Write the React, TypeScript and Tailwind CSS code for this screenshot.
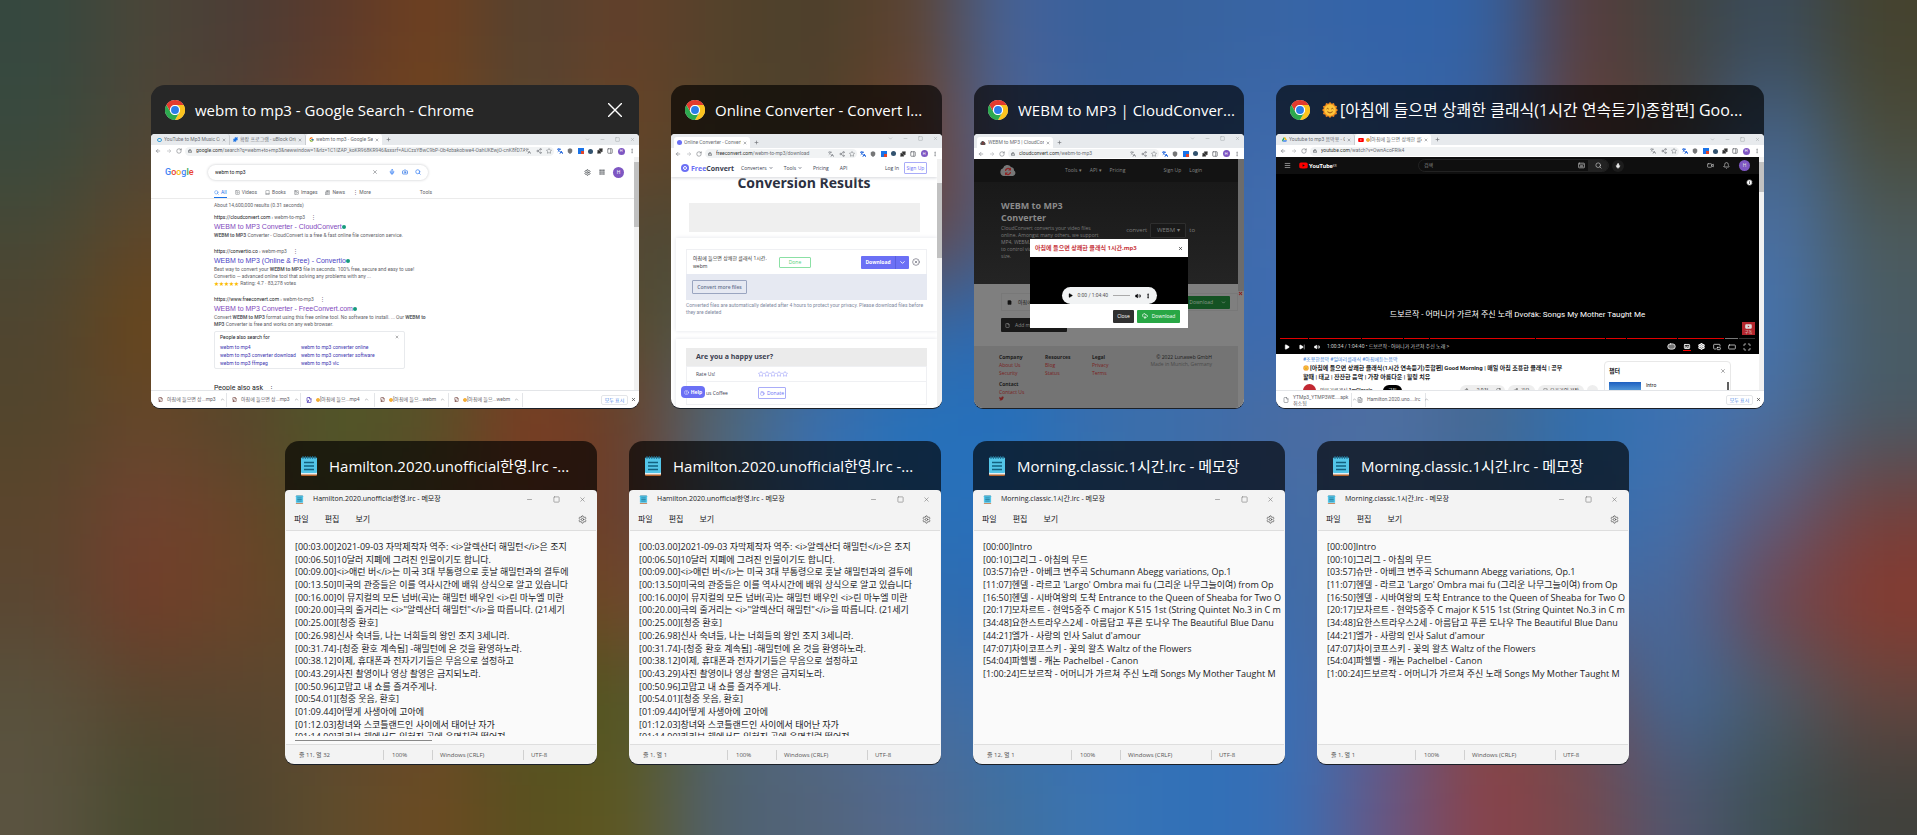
import type { ReactNode } from "react";
import {
  ArrowLeft,
  ArrowRight,
  Bell,
  Book,
  Captions,
  Camera,
  ChevronDown,
  ChevronUp,
  CircleHelp,
  CircleX,
  CloudDownload,
  Coffee,
  EllipsisVertical,
  File,
  FileMusic,
  FileText,
  Flag,
  Image,
  Info,
  Keyboard,
  Languages,
  Lock,
  Maximize,
  Menu,
  Mic,
  Minus,
  Newspaper,
  PanelRight,
  PictureInPicture2,
  Play,
  Plus,
  Puzzle,
  RectangleHorizontal,
  RotateCw,
  Search,
  Settings,
  Share2,
  Shield,
  SkipForward,
  SquarePlay,
  Square,
  Star,
  ThumbsDown,
  ThumbsUp,
  ToggleRight,
  Volume2,
  VideoIcon,
  X,
} from "lucide-react";
import { FcGoogle } from "react-icons/fc";
import { FaTwitter, FaYoutube } from "react-icons/fa";
import { BsGrid3X3GapFill } from "react-icons/bs";

/* ---------- wallpaper ---------- */

const WALLPAPER = [
  "36483f 4b4638 4b3d36 5c3a2b 70401f 544230 64402a 54422b 4c402c 5e422e 466399 37609c 38639f 3865a6 3263a9 3362a4 5a3c3a 404440 3a4c5e 45432f",
  "3a4a3e 4f4636 554032 6a3f28 70461c 584632 6a4424 54452c 50412b 744028 4d6496 3b63a0 3a66a8 3f6aab 3a66a8 3a62a0 6a4038 4d4240 446a98 4a4c3c",
  "474835 60472a 5c4429 5c4a2c 604c28 564a30 4f4838 504830 55442c 6c4238 4d5c80 3868a8 3c68a8 446eb0 4470b0 446ca4 5f5458 4a5c78 4a73ab 4b5a5c",
  "504530 6b4518 5f4828 54502a 5a4c28 6c4228 554b2c 50564c 446488 3a68a4 2a6ab4 386cb0 3c6cb0 3a6bb0 4870a8 446ca0 3c6ca4 4472b0 4574b0 4a5c64",
  "52452c 65472a 54462d 505828 575228 7c3c22 6c3f28 4f6a80 3a70b0 2571bb 2470bb 3a6fab 3f6da8 4c6ba0 506ea0 46678d 2f70b0 3c72b3 4c6f9f 475a66",
  "5c452c 714230 6a4428 505028 604828 743c24 683e2c 4f6070 3a6eac 2870b8 2a70bb 366eb0 3d6ca8 446ca6 4870a4 3c6ca0 346cac 4470ac 5c5c7c 74403c",
  "5a4632 743c28 6b4528 5c4828 644828 5c4c28 784424 54585c 40689c 306cb0 2b6bb3 386cb0 3c6eb0 3f6ca8 506494 5c5c80 48689c 49689c 74444c 883a2e",
  "59513c 58462f 5a4630 5c4830 68482a 505422 52561f 50646c 50688c 446ca0 3a70b0 386fb2 3070b8 3c70b4 5c5c8c 8a443c 6c4c54 3f6a9c 4a5c6c 644640",
  "5a5340 484a2f 4f4530 5f4c2c 6c4a22 595020 5e5820 4f6170 52647a 52698f 3f709f 3974b5 3070b8 3a6eb4 6a5580 8a4248 75494e 4f5670 3d4f52 40413c",
].map((row) => row.split(" "));

function Wallpaper() {
  return (
    <svg
      className="absolute inset-0 h-full w-full"
      viewBox="0 0 20 9"
      preserveAspectRatio="none"
      aria-hidden="true"
    >
      <defs>
        <filter id="soften" x="-10%" y="-20%" width="120%" height="140%" colorInterpolationFilters="sRGB">
          <feGaussianBlur stdDeviation="0.42 0.5" />
        </filter>
      </defs>
      <g filter="url(#soften)" shapeRendering="crispEdges">
        {WALLPAPER.map((row, y) =>
          row.map((color, x) => (
            <rect
              key={`${x}-${y}`}
              x={x === 0 ? -2 : x}
              y={y === 0 ? -2 : y}
              width={x === 0 || x === 19 ? 3 : 1}
              height={y === 0 || y === 8 ? 3 : 1}
              fill={`#${color}`}
            />
          ))
        )}
      </g>
    </svg>
  );
}

/* ---------- logos ---------- */

function ChromeLogo() {
  return (
    <svg className="size-5 shrink-0" viewBox="0 0 48 48" aria-hidden="true">
      <circle cx="24" cy="24" r="24" fill="#fff" />
      <path d="M24 12h20.8A24 24 0 0 0 3.2 12l10.4 18A12 12 0 0 1 24 12z" fill="#e33b2e" />
      <path d="M34.4 30 24 48A24 24 0 0 0 44.8 12H24a12 12 0 0 1 10.4 18z" fill="#fcc31e" />
      <path d="M13.6 30 3.2 12A24 24 0 0 0 24 48l10.4-18a12 12 0 0 1-20.8 0z" fill="#2da94f" />
      <circle cx="24" cy="24" r="12" fill="#fff" />
      <circle cx="24" cy="24" r="9.5" fill="#2b7de9" />
    </svg>
  );
}

function NotepadLogo({ className }: { className: string }) {
  return (
    <svg className={className} viewBox="0 0 20 20" aria-hidden="true">
      <rect x="2" y="17" width="16" height="3" rx="1" fill="#b5622b" />
      <rect x="2" y="15" width="16" height="3.5" fill="#e9eef0" />
      <rect x="2" y="1.5" width="16" height="15.5" rx="1" fill="#53c5e8" />
      <path d="M4 0v3M6.4 0v3M8.8 0v3M11.2 0v3M13.6 0v3M16 0v3" stroke="#1c6f92" strokeWidth="1" />
      <path d="M5 6.5h10M5 10h10M5 13.5h10" stroke="#12607f" strokeWidth="1.3" />
    </svg>
  );
}

function SunFace({ className }: { className: string }) {
  return (
    <svg className={className} viewBox="0 0 24 24" aria-hidden="true">
      <path
        d="M12 0l2.6 2.8L18 1.6l1 3.6 3.6 1L21.4 9.6 24 12l-2.6 2.6 1.2 3.4-3.6 1-1 3.6-3.4-1.2L12 24l-2.6-2.6L6 22.6l-1-3.6-3.600-1 1.200-3.400L0 12l2.600-2.400L1.400 6.200l3.600-1 1-3.600 3.400 1.200z"
        fill="#f08a1d"
      />
      <circle cx="12" cy="12" r="8.5" fill="#fdc53a" />
      <path d="M7 10.5q1.5-2 3 0M14 10.5q1.5-2 3 0M8 14.5q4 4 8 0" fill="none" stroke="#8a4a12" strokeWidth="1.4" />
    </svg>
  );
}

/* ---------- task card ---------- */

type CardProps = {
  title: string;
  icon: ReactNode;
  emoji?: boolean;
  active?: boolean;
  className: string;
  children: ReactNode;
};

function TaskCard({ title, icon, emoji, active, className, children }: CardProps) {
  return (
    <article
      className={`flex shrink-0 flex-col overflow-hidden rounded-t-[14px] rounded-b-[9px] shadow-[0_1px_0_#1b2028] ${className} ${
        active ? "bg-[#272727]" : "bg-black/65"
      }`}
    >
      <header className="flex h-[49px] shrink-0 items-center gap-[10px] pr-[8px] pl-[14px] text-white">
        {icon}
        {emoji && <SunFace className="mr-[-8px] ml-[2px] size-4 shrink-0" />}
        <h2 className={`min-w-0 flex-1 leading-6 whitespace-nowrap ${emoji ? "text-base" : "text-[15px]"}`}>{title}</h2>
        {active && (
          <button type="button" aria-label="Close" className="mr-[5px] flex size-[22px] items-center justify-center">
            <svg className="size-[14px]" viewBox="0 0 14 14" stroke="#fff" strokeWidth="1.4" aria-hidden="true">
              <path d="M0 0l14 14M14 0L0 14" />
            </svg>
          </button>
        )}
      </header>
      <div className="flex h-[274px] flex-col overflow-hidden rounded-t-[4px] bg-white text-[#202124]">{children}</div>
    </article>
  );
}

/* ---------- browser chrome ---------- */

type Tab = { title: string; icon: ReactNode; active?: boolean };

function BrowserChrome({
  tabs,
  url,
  path,
  compact,
}: {
  tabs: Tab[];
  url: string;
  path: string;
  compact?: boolean;
}) {
  return (
    <div className="shrink-0 font-[Roboto,'Noto_Sans_CJK_KR',sans-serif] text-[5px] text-[#6b6f74]">
      <div className={`flex items-end bg-[#e7eaed] pl-[3px] ${compact ? "h-[14px]" : "h-[11px]"}`}>
        {tabs.map((tab, i) => (
          <div
            key={i}
            className={`flex h-[11px] w-[76px] items-center gap-[2px] rounded-t-[3px] px-[3px] ${
              tab.active ? "bg-white" : "border-r border-[#c9ccd0]"
            }`}
          >
            {tab.icon}
            <span className="min-w-0 flex-1 overflow-hidden whitespace-nowrap">{tab.title}</span>
            <X className="size-1 shrink-0" strokeWidth={3} />
          </div>
        ))}
        <Plus className="mb-[3px] ml-1 size-[5px]" strokeWidth={3} />
        <div className={`mr-[4px] ml-auto flex w-[50px] items-center justify-between self-start text-[#9a9da1] ${compact ? "pt-[2px]" : "pt-[3px]"}`}>
          <ChevronDown className="size-[5px]" />
          <Minus className="size-[5px]" />
          <Square className="size-[5px]" />
          <X className="size-[5px]" />
        </div>
      </div>
      <div className={`flex items-center bg-white pr-1 pl-1 ${compact ? "h-[11px]" : "h-[12px]"}`}>
        <div className="flex w-[27px] shrink-0 justify-between text-[#5f6368]">
          <ArrowLeft className="size-[6px]" />
          <ArrowRight className="size-[6px] opacity-60" />
          <RotateCw className="size-[6px]" />
        </div>
        <div className="mx-[3px] flex h-[9px] min-w-0 flex-1 items-center rounded-full bg-[#f1f3f4] pr-[2px] pl-[3px]">
          <Lock className="mr-[4px] size-[4px] shrink-0" strokeWidth={4} />
          <span className="min-w-0 flex-1 overflow-hidden whitespace-nowrap">
            <span className="text-[#333]">{url}</span>
            {path}
          </span>
          <div className="flex w-[27px] shrink-0 justify-between">
            <Languages className="size-[6px]" />
            <Share2 className="size-[6px]" />
            <Star className="size-[6px]" />
          </div>
        </div>
        <div className="flex w-[78px] shrink-0 items-center justify-between">
          <Languages className="size-[6px] text-[#2f6fde]" strokeWidth={4} />
          <Shield className="size-[6px]" fill="#777" />
          <span className="flex size-[6px] items-end justify-end bg-[#1a73e8]">
            <span className="size-[3px] bg-[#e0452c]" />
          </span>
          <span className="size-[5px] rounded-full bg-[#33536f]" />
          <Puzzle className="size-[6px] text-[#333]" fill="#333" />
          <PanelRight className="size-[6px]" strokeWidth={3} />
          <span className="flex size-[7px] items-center justify-center rounded-full bg-[#7e57c2] text-[4px] text-white">H</span>
          <EllipsisVertical className="size-[6px]" />
        </div>
      </div>
    </div>
  );
}

function Scrollbar({ children }: { children: ReactNode }) {
  return <div className="flex w-[5px] shrink-0 flex-col items-stretch bg-[#f1f1f1]">{children}</div>;
}

function DownloadBar({ items }: { items: ReactNode[] }) {
  return (
    <div className="flex h-[18px] shrink-0 items-center border-t border-[#e3e5e8] bg-white pl-[2px] font-[Roboto,'Noto_Sans_CJK_KR',sans-serif] text-[5px] whitespace-nowrap text-[#5f6368]">
      {items.map((item, i) => (
        <div key={i} className="flex h-[14px] w-[74px] items-center gap-[4px] border-r border-[#e3e5e8] pr-[5px] pl-[5px]">
          {item}
          <ChevronUp className="ml-auto size-[5px] shrink-0" />
        </div>
      ))}
      <button type="button" className="mr-[3px] ml-auto h-[10px] w-[27px] rounded-[2px] border border-[#e3e5e8] leading-[8px] text-[#4a87e8]">
        모두 표시
      </button>
      <X className="mr-[3px] size-[5px] text-[#333]" strokeWidth={3} />
    </div>
  );
}

/* ---------- Google results ---------- */

const AUDIO_ICON = <FileMusic className="size-[5px] shrink-0 text-[#7a4b45]" strokeWidth={3} />;
const SUN_TINY = <SunFace className="mr-[-4px] size-[4px] shrink-0" />;

const googleDownloads = [
  <>{AUDIO_ICON}<span>아침에 들으면 상...mp3</span></>,
  <>{AUDIO_ICON}<span>아침에 들으면 상...mp3</span></>,
  <><FileMusic className="size-[6px] shrink-0 text-[#5340b8]" strokeWidth={3} />{SUN_TINY}<span>[아침에 들으...mp4</span></>,
  <>{AUDIO_ICON}{SUN_TINY}<span>[아침에 들으...webm</span></>,
  <>{AUDIO_ICON}{SUN_TINY}<span>[아침에 들으...webm</span></>,
];

const related = [
  ["webm to mp4", "webm to mp3 converter online"],
  ["webm to mp3 converter download", "webm to mp3 converter software"],
  ["webm to mp3 ffmpeg", "webm to mp3 vlc"],
];

function Result({ site, path, title, visited, children }: { site: string; path: string; title: string; visited?: boolean; children: ReactNode }) {
  return (
    <div>
      <p>
        <span className="text-[#202124]">{site}</span> › {path}
        <span className="ml-[6px]">⋮</span>
      </p>
      <h3 className="flex items-center font-['Liberation_Sans',sans-serif] text-[7px] leading-[11px] whitespace-nowrap">
        <a href="#result" className={visited ? "text-[#8148bd]" : "text-[#4a3fc4]"}>
          {title}
        </a>
        <span className="size-[4px] rounded-full bg-[#159a7c]" />
      </h3>
      {children}
    </div>
  );
}

function GoogleWindow() {
  return (
    <>
      <BrowserChrome
        tabs={[
          { title: "YouTube to Mp3 Music Conver", icon: <span className="h-1 w-[5px] shrink-0 rounded-full border border-[#3aa0d8]" /> },
          { title: "확장 프로그램 - uBlock Origin", icon: <Puzzle className="size-[5px] shrink-0 text-[#1a73e8]" fill="#1a73e8" /> },
          { title: "webm to mp3 - Google Search", icon: <FcGoogle className="size-[5px] shrink-0" />, active: true },
        ]}
        url="google.com"
        path="/search?q=webm+to+mp3&newwindow=1&rlz=1C1IZAP_koKR968KR946&sxsrf=ALiCzsYBwC9bP-Ob4zbakobwe4-OahUKEwjO-cnK8fD7AhWDM5QKHfjw..."
      />
      <div className="flex min-h-0 flex-1 font-[Roboto,'Noto_Sans_CJK_KR',sans-serif]">
        <div className="min-w-0 flex-1 overflow-hidden text-[5px] leading-[7px] text-[#5f6368]">
          <div className="flex h-[30px] items-center pr-[10px] pl-[14px]">
            <div className="w-[43px] text-[9px] leading-[12px] font-medium">
              <span className="text-[#4285f4]">G</span>
              <span className="text-[#ea4335]">o</span>
              <span className="text-[#fbbc05]">o</span>
              <span className="text-[#4285f4]">g</span>
              <span className="text-[#34a853]">l</span>
              <span className="text-[#ea4335]">e</span>
            </div>
            <div className="flex h-[15px] w-[220px] items-center gap-[7px] rounded-full px-[7px] shadow-[0_0_3px_#c4c6c9]">
              <input aria-label="Search" defaultValue="webm to mp3" className="min-w-0 flex-1 text-[5px] text-[#202124] outline-none" />
              <X className="mr-1 size-[6px]" />
              <Mic className="size-[6px] text-[#4285f4]" strokeWidth={3} />
              <Camera className="size-[6px] text-[#3b7de8]" strokeWidth={3} />
              <Search className="size-[6px] text-[#4285f4]" strokeWidth={3} />
            </div>
            <div className="ml-auto flex items-center gap-[8px]">
              <Settings className="size-[7px]" strokeWidth={3} />
              <BsGrid3X3GapFill className="size-[6px]" />
              <span className="flex size-[11px] items-center justify-center rounded-full bg-[#7e57c2] text-white">H</span>
            </div>
          </div>
          <nav className="flex h-[12px] items-stretch gap-[8px] border-b border-[#ebebeb] pl-[63px]">
            <a href="#all" className="flex items-center gap-[2px] border-b border-[#1a73e8] text-[#1a73e8]"><Search className="size-[5px]" />All</a>
            <a href="#videos" className="flex items-center gap-[2px]"><SquarePlay className="size-[5px]" />Videos</a>
            <a href="#books" className="flex items-center gap-[2px]"><Book className="size-[5px]" />Books</a>
            <a href="#images" className="flex items-center gap-[2px]"><Image className="size-[5px]" />Images</a>
            <a href="#news" className="flex items-center gap-[2px]"><Newspaper className="size-[5px]" />News</a>
            <a href="#more" className="flex items-center gap-[2px]">⋮ More</a>
            <a href="#tools" className="ml-[41px] flex items-center">Tools</a>
          </nav>
          <div className="flex w-[254px] flex-col gap-[9px] pt-[3px] pl-[63px]">
            <div>
              <p className="mb-[5px]">About 14,600,000 results (0.31 seconds)</p>
              <Result site="https://cloudconvert.com" path="webm-to-mp3" title="WEBM to MP3 Converter - CloudConvert" visited>
                <p className="whitespace-nowrap"><b>WEBM to MP3</b> Converter - CloudConvert is a free &amp; fast online file conversion service.</p>
              </Result>
            </div>
            <Result site="https://convertio.co" path="webm-mp3" title="WEBM to MP3 (Online & Free) - Convertio">
              <p className="whitespace-nowrap">Best way to convert your <b>WEBM to MP3</b> file in seconds. 100% free, secure and easy to use!</p>
              <p>Convertio — advanced online tool that solving any problems with any ...</p>
              <p><span className="text-[#fbbc04]">★★★★★</span> Rating: 4.7 · 83,278 votes</p>
            </Result>
            <div>
              <Result site="https://www.freeconvert.com" path="webm-to-mp3" title="WEBM to MP3 Converter - FreeConvert.com" visited>
                <p className="whitespace-nowrap">Convert <b>WEBM to MP3</b> format using this free online tool. No software to install. ... Our <b>WEBM to</b></p>
                <p><b>MP3</b> Converter is free and works on any web browser.</p>
              </Result>
              <div className="mt-[3px] flex h-[38px] flex-col justify-center rounded-[2px] border border-[#e8eaed] px-[5px]">
                <div className="flex items-center justify-between text-[#202124]">People also search for<X className="size-1" /></div>
                <div className="mt-[2px] grid grid-cols-[auto_1fr] gap-x-[5px] leading-[8px] whitespace-nowrap text-[#4036b0]">
                  {related.flat().map((text) => (
                    <a key={text} href="#related">{text}</a>
                  ))}
                </div>
              </div>
              <p className="mt-[14px] text-[7px] leading-[10px] text-[#202124]">People also ask<span className="ml-[6px] text-[5px]">⋮</span></p>
            </div>
          </div>
        </div>
        <Scrollbar>
          <div className="mt-[5px] h-[65px] bg-[#c1c1c1]" />
        </Scrollbar>
      </div>
      <DownloadBar items={googleDownloads} />
    </>
  );
}

/* ---------- FreeConvert ---------- */

function FreeConvertWindow() {
  return (
    <>
      <BrowserChrome
        compact
        tabs={[{ title: "Online Converter - Convert Ima", icon: <span className="size-[5px] shrink-0 rounded-full bg-[#6b70f5]" />, active: true }]}
        url="freeconvert.com"
        path="/webm-to-mp3/download"
      />
      <div className="flex min-h-0 flex-1 text-[#3a4050]">
        <div className="relative min-w-0 flex-1 overflow-hidden text-[5px] leading-[7px]">
          <nav className="relative flex h-[18px] items-center pr-[10px] pl-[10px] shadow-[0_1px_3px_#d5d7dc]">
            <span className="mr-[2px] flex size-[8px] items-center justify-center rounded-full bg-[#6b70f5]">
              <span className="size-1 rounded-full border border-white" />
            </span>
            <b className="text-[7px]"><span className="text-[#6b70f5]">Free</span>Convert</b>
            <div className="ml-[7px] flex items-center gap-[11px]">
              <a href="#converters" className="flex items-center gap-[2px]">Converters<ChevronDown className="size-1" strokeWidth={4} /></a>
              <a href="#tools" className="flex items-center gap-[2px]">Tools<ChevronDown className="size-1" strokeWidth={4} /></a>
              <a href="#pricing">Pricing</a>
              <a href="#api">API</a>
            </div>
            <a href="#login" className="ml-auto">Log In</a>
            <button type="button" className="ml-[5px] h-[12px] w-[23px] rounded-[1px] border border-[#a9acf8] leading-[7px] text-[#6b70f5]">Sign Up</button>
          </nav>
          <h3 className="mt-[-2px] text-center text-sm leading-[16px] font-bold text-[#2b3040]">Conversion Results</h3>
          <div className="mx-auto mt-[12px] h-[29px] w-[231px] bg-[#efefef]" />
          <section className="mt-[6px] ml-[5px] h-[93px] px-[10px] pt-[11px] shadow-[0_0_4px_#e2e3e8]">
            <div className="flex h-[25px] items-center border border-b-0 border-[#eff0f3] pl-[6px]">
              <p className="w-[86px] leading-[8px] text-[#333]">아침에 들으면 상쾌한 클래식 1시간.<br />webm</p>
              <span className="h-[11px] w-[32px] rounded-[1px] border border-[#8be0a5] text-center leading-[9px] text-[#4fd07a]">Done</span>
              <button type="button" className="ml-auto flex h-[13px] w-[48px] items-center rounded-[1px] bg-[#6b70f5] font-bold text-white">
                <span className="w-[34px] text-center">Download</span>
                <span className="flex h-full flex-1 items-center justify-center border-l border-[#5a5fe0]"><ChevronDown className="size-[7px]" strokeWidth={3} /></span>
              </button>
              <CircleX className="mr-[6px] ml-[3px] size-[8px] text-[#667]" />
            </div>
            <div className="flex h-[26px] items-center bg-[#e6e9f2] pl-[6px]">
              <button type="button" className="h-[14px] w-[55px] rounded-[1px] border border-[#9aa5c0] leading-[7px] font-semibold text-[#66728f]">Convert more files</button>
            </div>
            <p className="mt-[2px] font-[Roboto,sans-serif] text-[#8089a0]">Converted files are automatically deleted after 4 hours to protect your privacy. Please download files before they are deleted</p>
          </section>
          <section className="mt-[8px] ml-[5px] h-[80px] px-[10px] pt-[9px] shadow-[0_0_4px_#e2e3e8]">
            <h4 className="h-[18px] bg-[#ebebeb] pl-[10px] text-[7px] leading-[18px] font-bold">Are you a happy user?</h4>
            <div className="flex h-[16px] items-center border border-[#eff0f3] pl-[9px]">
              <span className="w-[62px]">Rate Us!</span>
              {[0, 1, 2, 3, 4].map((n) => (
                <Star key={n} className="size-[6px] text-[#8c90f7]" />
              ))}
            </div>
            <div className="flex h-[23px] items-center border border-t-0 border-[#eff0f3] pl-[9px]">
              <span className="w-[62px] pl-[10px]">us Coffee</span>
              <button type="button" className="flex h-[12px] w-[28px] items-center justify-center gap-[2px] rounded-[1px] border border-[#a9acf8] text-[#6b70f5]"><Coffee className="size-[5px]" />Donate</button>
            </div>
          </section>
          <button type="button" className="absolute bottom-[10px] left-[10px] flex h-[12px] w-[24px] items-center justify-center gap-[2px] rounded-[4px] bg-[#6b70f5] font-bold text-white">
            <CircleHelp className="size-[5px]" />Help
          </button>
        </div>
        <Scrollbar>
          <div className="mt-[24px] h-[75px] bg-[#c1c1c1]" />
        </Scrollbar>
      </div>
    </>
  );
}

/* ---------- CloudConvert ---------- */

function CloudIcon({ className, cloud, arrows }: { className: string; cloud: string; arrows: string }) {
  return (
    <svg className={className} viewBox="0 0 32 22" aria-hidden="true">
      <path d="M8 22a8 8 0 0 1-2-15.5A9 9 0 0 1 22 4a7 7 0 0 1 6 7 6 6 0 0 1-2 11z" fill={cloud} />
      <path d="M11 12a5 5 0 0 1 9-3M21 14a5 5 0 0 1-9 3" fill="none" stroke={arrows} strokeWidth="2.5" />
      <path d="M22 5v6h-6zM10 21v-6h6z" fill={arrows} />
    </svg>
  );
}

function CloudConvertWindow() {
  return (
    <>
      <BrowserChrome
        compact
        tabs={[{ title: "WEBM to MP3 | CloudConvert", icon: <CloudIcon className="h-[4px] w-[6px] shrink-0" cloud="#555" arrows="#a22" />, active: true }]}
        url="cloudconvert.com"
        path="/webm-to-mp3"
      />
      <div className="relative flex min-h-0 flex-1 bg-[#7f7f7f] text-[5px] leading-[7px] font-['Open_Sans','Noto_Sans_CJK_KR',sans-serif]">
        <div className="flex min-w-0 flex-1 flex-col">
          <nav className="flex h-[23px] shrink-0 items-center bg-[#131313] pl-[26px] text-[#858585]">
            <CloudIcon className="h-[11px] w-[16px]" cloud="#777" arrows="#8f2424" />
            <div className="ml-[49px] flex gap-[8px]">
              <a href="#tools">Tools ▾</a>
              <a href="#api">API ▾</a>
              <a href="#pricing">Pricing</a>
            </div>
            <div className="mr-[36px] ml-auto flex gap-[8px]">
              <a href="#signup">Sign Up</a>
              <a href="#login">Login</a>
            </div>
          </nav>
          <section className="flex h-[102px] shrink-0 justify-between bg-linear-to-b from-[#191919] to-[#242424] pr-[43px] pl-[27px] text-[#7c7c7c]">
            <div className="w-[94px] pt-[18px]">
              <h3 className="text-[9px] leading-[12px] font-bold text-[#8a8a8a]">WEBM to MP3<br />Converter</h3>
              <p className="mt-px whitespace-pre">{"CloudConvert converts your video files\nonline. Amongst many others, we support\nMP4, WEBM,\nto control vid\nsize."}</p>
            </div>
            <div className="box-content flex h-[15px] items-center gap-[3px] pt-[41px] text-[6px]">
              <label htmlFor="from">convert</label>
              <select id="from" defaultValue="WEBM" className="h-[15px] w-[36px] appearance-none rounded-[1px] border border-[#2e2e2e] bg-[#191919] text-center text-[6px]">
                <option value="WEBM">WEBM ▾</option>
              </select>
              <span>to</span>
            </div>
          </section>
          <section className="flex h-[62px] shrink-0 flex-col gap-[7px] pt-[9px] pl-[27px] text-[#1c1c1c]">
            <div className="flex h-[18px] items-center border border-[#787878] pr-[7px] pl-[5px]">
              <FileText className="mr-[6px] size-[5px]" fill="#111" />
              아침에
              <button type="button" className="ml-auto flex h-[13px] w-[46px] items-center justify-end gap-[8px] rounded-[1px] bg-[#145223] pr-[4px] text-[#8a9a8d]">
                Download<ChevronDown className="size-[5px]" strokeWidth={3} />
              </button>
            </div>
            <button type="button" className="flex h-[14px] w-[66px] items-center gap-[5px] rounded-[1px] bg-[#191919] pl-[4px] text-[#8a8a8a]">
              <File className="size-[5px]" strokeWidth={3} />Add m
            </button>
          </section>
          <footer className="flex flex-1 bg-[#747474] pt-[7px] pl-[25px] text-[#7a2222]">
            <div className="w-[46px] leading-[8px]">
              <b className="block text-[#1c1c1c]">Company</b>
              <a href="#about" className="block">About Us</a>
              <a href="#security" className="block">Security</a>
              <b className="mt-[3px] block text-[#1c1c1c]">Contact</b>
              <a href="#contact" className="block">Contact Us</a>
              <FaTwitter className="size-[5px]" />
            </div>
            <div className="w-[47px] leading-[8px]">
              <b className="block text-[#1c1c1c]">Resources</b>
              <a href="#blog" className="block">Blog</a>
              <a href="#status" className="block">Status</a>
            </div>
            <div className="leading-[8px]">
              <b className="block text-[#1c1c1c]">Legal</b>
              <a href="#privacy" className="block">Privacy</a>
              <a href="#terms" className="block">Terms</a>
            </div>
            <p className="mr-[26px] ml-auto pt-px text-right text-[#4a4a4a]"><span className="text-[#1c1c1c]">© 2022 Lunaweb GmbH</span><br />Made in Munich, Germany</p>
          </footer>
        </div>
        <div className="flex w-[6px] shrink-0 flex-col">
          <div className="h-[132px] bg-[#6c6c6c]" />
          <X className="size-[5px] text-[#8a1f1f]" strokeWidth={5} />
        </div>
        <div role="dialog" aria-label="Preview" className="absolute top-[80px] left-[56px] flex h-[89px] w-[158px] flex-col bg-white">
          <div className="flex h-[18px] items-center justify-between px-[5px]">
            <b className="text-[6px] whitespace-nowrap text-[#c8373d]">아침에 들으면 상쾌한 클래식 1시간.mp3</b>
            <X className="size-[5px]" strokeWidth={3} />
          </div>
          <div className="flex h-[47px] items-end justify-center bg-black">
            <div className="flex h-[17px] w-[95px] items-center rounded-full bg-[#f1f3f4] px-[6px]">
              <Play className="mr-[5px] size-[5px]" fill="#000" />
              <span className="font-[Roboto,sans-serif] text-[#555]">0:00 / 1:04:40</span>
              <span className="mx-[5px] h-px flex-1 bg-[#aaa]" />
              <Volume2 className="size-[6px]" fill="#000" />
              <EllipsisVertical className="ml-[4px] size-[6px]" strokeWidth={4} />
            </div>
          </div>
          <div className="flex flex-1 items-center justify-end gap-[3px] pr-[8px] text-white">
            <button type="button" className="h-[13px] w-[21px] rounded-[1px] bg-[#303030]">Close</button>
            <button type="button" className="flex h-[13px] w-[43px] items-center justify-center gap-[4px] rounded-[1px] bg-[#28a745]"><CloudDownload className="size-[6px]" strokeWidth={3} />Download</button>
          </div>
        </div>
      </div>
    </>
  );
}

/* ---------- YouTube ---------- */

// chapter widths along the seek bar
const chapters = [28, 52, 41, 25, 105, 69, 20, 50, 46];

function YouTubeWindow() {
  return (
    <>
      <BrowserChrome
        tabs={[
          {
            title: "Youtube to mp3 음악용 - Goog",
            icon: (
              <svg className="size-[5px] shrink-0" viewBox="0 0 10 9" aria-hidden="true">
                <path d="M3.5 0h3L10 6H6.8z" fill="#fbbc04" />
                <path d="M3.5 0L0 6l1.5 3 3.5-6z" fill="#1ea362" />
                <path d="M3.2 6H10L8.5 9h-7z" fill="#4285f4" />
              </svg>
            ),
          },
          { title: "[아침에 들으면 상쾌한 클래", icon: <><FaYoutube className="size-[6px] shrink-0 text-[#f00]" /><SunFace className="mr-[-2px] size-1 shrink-0" /></>, active: true },
        ]}
        url="youtube.com"
        path="/watch?v=OwnAcoFRIk4"
      />
      <div className="flex min-h-0 flex-1 text-[5px] leading-[7px] font-[Roboto,'Noto_Sans_CJK_KR',sans-serif]">
        <div className="min-w-0 flex-1 overflow-hidden">
          <div className="flex h-[17px] items-center bg-[#0f0f0f] pr-[9px] pl-[8px] text-[#ddd]">
            <Menu className="size-[7px]" />
            <FaYoutube className="ml-[8px] size-[9px] text-[#f00]" />
            <b className="ml-px w-[109px] text-[6px] text-white">YouTube<sup className="text-[3px] text-[#999]">KR</sup></b>
            <div className="flex h-[13px] w-[191px] items-center overflow-hidden rounded-full border border-[#222]">
              <input aria-label="검색" placeholder="검색" className="min-w-0 flex-1 pl-[5px] text-[5px] placeholder:text-[#888]" />
              <Keyboard className="mr-[3px] size-[7px]" />
              <span className="flex h-full w-[20px] items-center justify-center bg-[#222]"><Search className="size-[7px]" /></span>
            </div>
            <span className="ml-[3px] flex size-[12px] items-center justify-center rounded-full bg-[#1c1c1c]"><Mic className="size-[6px]" fill="#fff" /></span>
            <div className="ml-auto flex items-center gap-[9px]">
              <VideoIcon className="size-[7px]" />
              <Bell className="size-[7px]" />
              <span className="flex size-[11px] items-center justify-center rounded-full bg-[#7e57c2]">H</span>
            </div>
          </div>
          <div className="flex h-[180px] flex-col bg-black px-[4px] text-white">
            <Info className="mt-[5px] mr-[2px] size-[7px] self-end text-black" fill="#fff" />
            <p className="mt-auto text-center text-[8px] leading-[10px]">드보르작 - 어머니가 가르쳐 주신 노래 Dvořák: Songs My Mother Taught Me</p>
            <span className="mt-[2px] flex h-[13px] w-[13px] flex-col items-center justify-center self-end bg-[#b3262d] text-[4px] leading-[5px] text-[#ddd]">
              <FaYoutube className="size-[7px]" />구독
            </span>
            <div className="mt-[3px] flex h-px shrink-0 gap-px">
              {chapters.map((width, i) => (
                <span key={i} className="bg-[#e00000]" style={{ width }} />
              ))}
              <span className="w-[13px] bg-[#777]" />
              <span className="flex-1 bg-[#333]" />
            </div>
            <div className="flex h-[15px] shrink-0 items-center px-[4px]">
              <Play className="size-[6px]" fill="#fff" />
              <SkipForward className="ml-[9px] size-[6px]" fill="#fff" />
              <Volume2 className="ml-[9px] size-[6px]" fill="#fff" />
              <span className="ml-[7px] text-[#ccc]">1:00:34 / 1:04:40 • 드보르작 - 어머니가 가르쳐 주신 노래 &gt;</span>
              <div className="ml-auto flex w-[84px] items-center justify-between">
                <ToggleRight className="size-[9px]" fill="#777" />
                <Captions className="size-[8px] border-b border-[#f00]" strokeWidth={3} />
                <Settings className="size-[7px]" strokeWidth={4} />
                <PictureInPicture2 className="size-[8px]" />
                <RectangleHorizontal className="size-[8px]" />
                <Maximize className="size-[8px]" />
              </div>
            </div>
          </div>
          <div className="flex pt-[2px] pl-[27px]">
            <div className="w-[301px] shrink-0">
              <p className="text-[#3d7fd6]">#조용한음악 #일마리클래식 #아침에듣는음악</p>
              <h3 className="text-[6px] leading-[9px] font-bold whitespace-nowrap">
                <SunFace className="mr-px inline size-[6px]" />
                [아침에 들으면 상쾌한 클래식(1시간 연속듣기)종합편] Good Morning | 매일 아침 조용한 클래식 | 공부
                <br />할때 | 태교 | 잔잔한 음악 | 가장 아름다운 | 힐링 치유
              </h3>
              <div className="mt-[3px] flex items-center text-[#333]">
                <span className="mr-[4px] size-[13px] rounded-full bg-[#c22832]" />
                <span className="w-[63px] whitespace-nowrap">일마리클래식 <b>1mClassic</b></span>
                <button type="button" className="mr-[58px] h-[12px] w-[19px] rounded-full bg-black text-white">구독</button>
                <div className="flex gap-[3px]">
                  <button type="button" className="flex h-[12px] w-[45px] items-center justify-around rounded-full bg-[#eee]"><ThumbsUp className="size-[5px]" />2.9천<ThumbsDown className="size-[5px]" /></button>
                  <button type="button" className="flex h-[12px] w-[27px] items-center justify-center gap-[2px] rounded-full bg-[#eee]"><Share2 className="size-[5px]" />공유</button>
                  <button type="button" className="flex h-[12px] w-[46px] items-center justify-center gap-[2px] rounded-full bg-[#eee]"><Flag className="size-[5px]" />오프라인 저장</button>
                  <button type="button" className="h-[12px] w-[11px] rounded-full bg-[#eee]">···</button>
                </div>
              </div>
            </div>
            <aside className="mt-[5px] h-[60px] w-[127px] rounded-t-[4px] border border-[#e8e8e8] px-[4px] pt-[5px]">
              <div className="flex items-center justify-between"><b className="text-[6px]">챕터</b><X className="size-[6px]" strokeWidth={1.5} /></div>
              <div className="mt-[8px] flex">
                <span className="mr-[5px] h-[20px] w-[32px] bg-linear-to-b from-[#1d5fc0] via-[#5fa3dc] to-[#4a8a2e] to-60%" />
                Intro
                <span className="mr-[-3px] ml-auto h-[20px] w-[2px] bg-[#606060]" />
              </div>
            </aside>
          </div>
        </div>
        <Scrollbar>
          <div className="mt-[5px] h-[30px] bg-[#c1c1c1]" />
        </Scrollbar>
      </div>
      <DownloadBar
        items={[
          <><File className="size-[6px] shrink-0" /><span className="leading-[6px]">YTMp3_YTMP3WE....apk<br />취소됨</span></>,
          <><FileText className="size-[6px] shrink-0" /><span>Hamilton.2020.uno....lrc</span></>,
        ]}
      />
    </>
  );
}

/* ---------- Notepad ---------- */

const hamilton = [
  "[00:03.00]2021-09-03 자막제작자 역주: <i>알렉산더 해밀턴</i>은 조지",
  "[00:06.50]10달러 지폐에 그려진 인물이기도 합니다.",
  "[00:09.00]<i>애런 버</i>는 미국 3대 부통령으로 훗날 해밀턴과의 결투에",
  "[00:13.50]미국의 관중들은 이를 역사시간에 배워 상식으로 알고 있습니다",
  "[00:16.00]이 뮤지컬의 모든 넘버(곡)는 해밀턴 배우인 <i>린 마누엘 미란",
  '[00:20.00]극의 줄거리는 <i>"알렉산더 해밀턴"</i>을 따릅니다. (21세기',
  "[00:25.00][청중 환호]",
  "[00:26.98]신사 숙녀들, 나는 너희들의 왕인 조지 3세니라.",
  "[00:31.74]-[청중 환호 계속됨] -해밀턴에 온 것을 환영하노라.",
  "[00:38.12]이제, 휴대폰과 전자기기들은 무음으로 설정하고",
  "[00:43.29]사진 촬영이나 영상 촬영은 금지되노라.",
  "[00:50.96]고맙고 내 쇼를 즐겨주게나.",
  "[00:54.01][청중 웃음, 환호]",
  "[01:09.44]어떻게 사생아에 고아에",
  "[01:12.03]창녀와 스코틀랜드인 사이에서 태어난 자가",
  "[01:14.90]카리브 해에서도 잊혀진 곳에 운명처럼 떨어져",
];

const morning = [
  "[00:00]Intro",
  "[00:10]그리그 - 아침의 무드",
  "[03:57]슈만 - 아베크 변주곡 Schumann Abegg variations, Op.1",
  "[11:07]헨델 - 라르고 'Largo' Ombra mai fu (그리운 나무그늘이여) from Op",
  "[16:50]헨델 - 시바여왕의 도착 Entrance to the Queen of Sheaba for Two O",
  "[20:17]모차르트 - 현악5중주 C major K 515 1st (String Quintet No.3 in C m",
  "[34:48]요한스트라우스2세 - 아름답고 푸른 도나우 The Beautiful Blue Danu",
  "[44:21]엘가 - 사랑의 인사 Salut d'amour",
  "[47:07]차이코프스키 - 꽃의 왈츠 Waltz of the Flowers",
  "[54:04]파헬벨 - 캐논 Pachelbel - Canon",
  "[1:00:24]드보르작 - 어머니가 가르쳐 주신 노래 Songs My Mother Taught M",
];

type NotepadProps = { file: string; lines: string[]; position: string; inset?: boolean; scrolled?: boolean };

function NotepadWindow({ file, lines, position, inset, scrolled }: NotepadProps) {
  return (
    <div className="flex h-full flex-col bg-[#f3f3f3] text-[7px] leading-[10px]">
      <div className="flex h-[18px] shrink-0 items-center pr-[11px] pl-[10px]">
        <NotepadLogo className="size-[9px]" />
        <span className="ml-[9px]">{file} - 메모장</span>
        <div className="ml-auto flex w-[60px] justify-between text-[#777]">
          <Minus className="size-[7px]" />
          <Square className="size-[7px]" />
          <X className="size-[7px]" />
        </div>
      </div>
      <div className="flex h-[22px] shrink-0 items-center gap-[16px] pr-[10px] pl-[9px] text-[8px]">
        <button type="button">파일</button>
        <button type="button">편집</button>
        <button type="button">보기</button>
        <Settings className="ml-auto size-[9px] text-[#555]" />
      </div>
      <div className={`mx-px h-[215px] shrink-0 border-y border-[#dedede] bg-[#fafafa] pt-[10px] pl-[9px] ${inset ? "pr-[10px]" : ""}`}>
        <div className="h-[195px] overflow-hidden">
          <div className="grid h-[203px] grid-rows-16 text-[9px] whitespace-pre">
            {lines.map((line) => (
              <p key={line} className="leading-3">{line}</p>
            ))}
          </div>
        </div>
        {scrolled && <div className="mt-[4px] h-px w-[137px] bg-[#888]" />}
      </div>
      <footer className="flex flex-1 items-center pl-[14px] text-[6px] text-[#555]">
        <span className="w-[84px]">{position}</span>
        <span className="w-[49px] border-l border-[#d0d0d0] pl-[8px]">100%</span>
        <span className="w-[91px] border-l border-[#d0d0d0] pl-[7px]">Windows (CRLF)</span>
        <span className="border-l border-[#d0d0d0] pl-[7px]">UTF-8</span>
      </footer>
    </div>
  );
}

/* ---------- task view ---------- */

const notepads = [
  { title: "Hamilton.2020.unofficial한영.lrc -...", file: "Hamilton.2020.unofficial한영.lrc", lines: hamilton, position: "줄 11, 열 32", inset: true, scrolled: true },
  { title: "Hamilton.2020.unofficial한영.lrc -...", file: "Hamilton.2020.unofficial한영.lrc", lines: hamilton, position: "줄 1, 열 1", inset: true },
  { title: "Morning.classic.1시간.lrc - 메모장", file: "Morning.classic.1시간.lrc", lines: morning, position: "줄 12, 열 1" },
  { title: "Morning.classic.1시간.lrc - 메모장", file: "Morning.classic.1시간.lrc", lines: morning, position: "줄 1, 열 1" },
];

export default function App() {
  return (
    <main className="relative min-h-screen overflow-hidden bg-[#45597a] font-['Open_Sans','Noto_Sans_CJK_KR',sans-serif]">
      <Wallpaper />
      <div className="relative flex flex-col gap-[33px] pt-[85px] pr-[2px]">
        <div className="flex justify-center gap-8">
          <TaskCard title="webm to mp3 - Google Search - Chrome" icon={<ChromeLogo />} active className="w-[488px]">
            <GoogleWindow />
          </TaskCard>
          <TaskCard title="Online Converter - Convert I..." icon={<ChromeLogo />} className="w-[271px]">
            <FreeConvertWindow />
          </TaskCard>
          <TaskCard title="WEBM to MP3 | CloudConver..." icon={<ChromeLogo />} className="w-[270px]">
            <CloudConvertWindow />
          </TaskCard>
          <TaskCard title="[아침에 들으면 상쾌한 클래식(1시간 연속듣기)종합편] Goo..." emoji icon={<ChromeLogo />} className="w-[488px]">
            <YouTubeWindow />
          </TaskCard>
        </div>
        <div className="flex justify-center gap-8 pr-px">
          {notepads.map(({ title, ...win }, i) => (
            <TaskCard key={i} title={title} icon={<NotepadLogo className="size-5 shrink-0" />} className="w-[312px]">
              <NotepadWindow {...win} />
            </TaskCard>
          ))}
        </div>
      </div>
    </main>
  );
}
